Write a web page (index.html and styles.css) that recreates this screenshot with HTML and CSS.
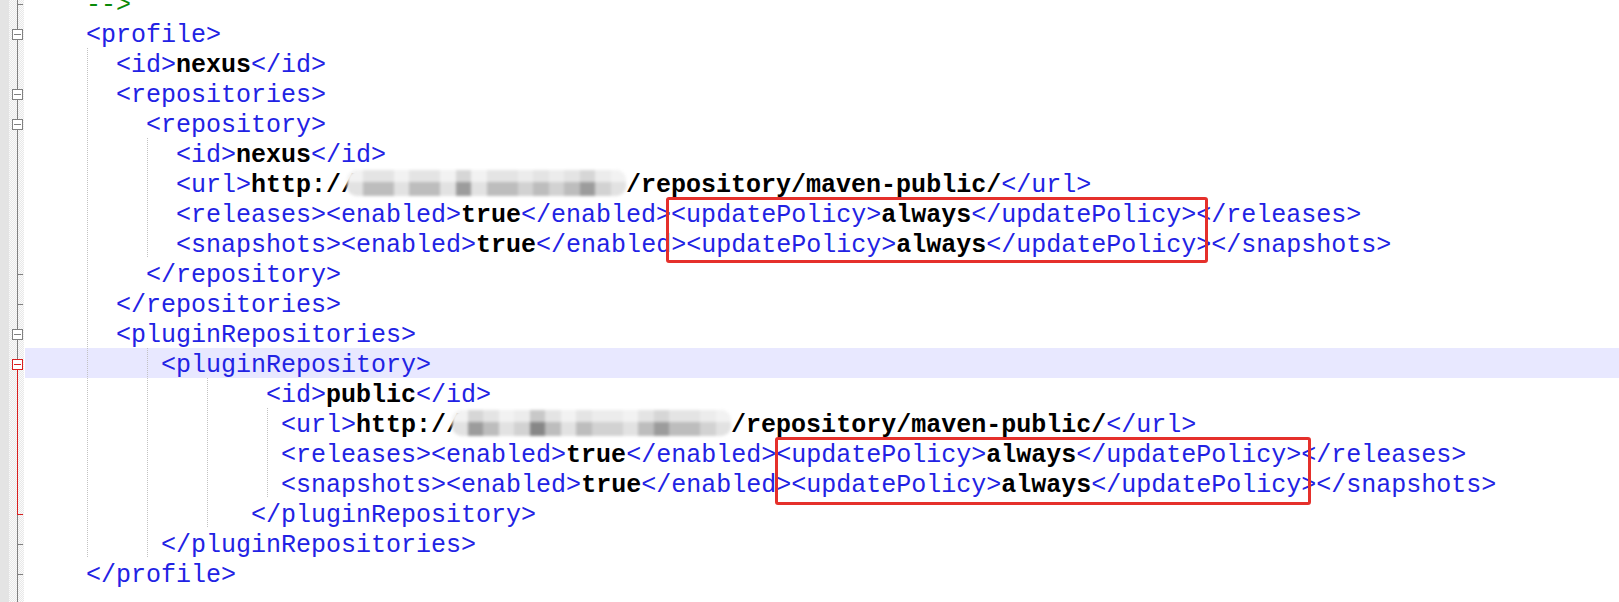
FILE: index.html
```html
<!DOCTYPE html>
<html>
	<head>
		<title>settings.xml</title>
		<link rel="stylesheet" href="styles.css">
	</head>
	<body>
		<div class="editor">
			<div class="margin">
				<div class="f end"></div>
				<div class="f line"><span class="bx"></span></div>
				<div class="f line"></div>
				<div class="f line"><span class="bx"></span></div>
				<div class="f line"><span class="bx"></span></div>
				<div class="f line"></div>
				<div class="f line"></div>
				<div class="f line"></div>
				<div class="f line"></div>
				<div class="f end"></div>
				<div class="f end"></div>
				<div class="f line"><span class="bx"></span></div>
				<div class="f open-red"><span class="bx red"></span></div>
				<div class="f red"></div>
				<div class="f red"></div>
				<div class="f red"></div>
				<div class="f red"></div>
				<div class="f red-end"></div>
				<div class="f end"></div>
				<div class="f end"></div>
				<div class="f line"></div>
			</div>
			<div class="code">
<div class="ln"><span class="c">--&gt;</span></div>
<div class="ln"><span class="t">&lt;profile&gt;</span></div>
<div class="ln"><span class="g">  </span><span class="t">&lt;id&gt;</span><b>nexus</b><span class="t">&lt;/id&gt;</span></div>
<div class="ln"><span class="g">  </span><span class="t">&lt;repositories&gt;</span></div>
<div class="ln"><span class="g">    </span><span class="t">&lt;repository&gt;</span></div>
<div class="ln"><span class="g">    </span><span class="g">  </span><span class="t">&lt;id&gt;</span><b>nexus</b><span class="t">&lt;/id&gt;</span></div>
<div class="ln"><span class="g">    </span><span class="g">  </span><span class="t">&lt;url&gt;</span><b>http://</b><span class="blur"><i class="a"></i><i class="c"></i><i class="c"></i><i class="a"></i><i class="c"></i><i class="c"></i><i class="a"></i><i class="d"></i><i class="a"></i><i class="c"></i><i class="c"></i><i class="b"></i><i class="c"></i><i class="b"></i><i class="c"></i><i class="d"></i><i class="b"></i><i class="a"></i></span><b>/repository/maven-public/</b><span class="t">&lt;/url&gt;</span></div>
<div class="ln"><span class="g">    </span><span class="g">  </span><span class="t">&lt;releases&gt;&lt;enabled&gt;</span><b>true</b><span class="t">&lt;/enabled&gt;&lt;updatePolicy&gt;</span><b>always</b><span class="t">&lt;/updatePolicy&gt;&lt;/releases&gt;</span></div>
<div class="ln"><span class="g">    </span><span class="g">  </span><span class="t">&lt;snapshots&gt;&lt;enabled&gt;</span><b>true</b><span class="t">&lt;/enabled&gt;&lt;updatePolicy&gt;</span><b>always</b><span class="t">&lt;/updatePolicy&gt;&lt;/snapshots&gt;</span></div>
<div class="ln"><span class="g">    </span><span class="t">&lt;/repository&gt;</span></div>
<div class="ln"><span class="g">  </span><span class="t">&lt;/repositories&gt;</span></div>
<div class="ln"><span class="g">  </span><span class="t">&lt;pluginRepositories&gt;</span></div>
<div class="ln current"><span class="g">    </span><span class="g"> </span><span class="t">&lt;pluginRepository&gt;</span></div>
<div class="ln"><span class="g">    </span><span class="g">    </span><span class="g">    </span><span class="t">&lt;id&gt;</span><b>public</b><span class="t">&lt;/id&gt;</span></div>
<div class="ln"><span class="g">    </span><span class="g">    </span><span class="g">    </span><span class="g"> </span><span class="t">&lt;url&gt;</span><b>http://</b><span class="blur"><i class="a"></i><i class="d"></i><i class="c"></i><i class="a"></i><i class="b"></i><i class="e"></i><i class="c"></i><i class="a"></i><i class="c"></i><i class="b"></i><i class="b"></i><i class="a"></i><i class="c"></i><i class="d"></i><i class="c"></i><i class="c"></i><i class="b"></i><i class="a"></i></span><b>/repository/maven-public/</b><span class="t">&lt;/url&gt;</span></div>
<div class="ln"><span class="g">    </span><span class="g">    </span><span class="g">    </span><span class="g"> </span><span class="t">&lt;releases&gt;&lt;enabled&gt;</span><b>true</b><span class="t">&lt;/enabled&gt;&lt;updatePolicy&gt;</span><b>always</b><span class="t">&lt;/updatePolicy&gt;&lt;/releases&gt;</span></div>
<div class="ln"><span class="g">    </span><span class="g">    </span><span class="g">    </span><span class="g"> </span><span class="t">&lt;snapshots&gt;&lt;enabled&gt;</span><b>true</b><span class="t">&lt;/enabled&gt;&lt;updatePolicy&gt;</span><b>always</b><span class="t">&lt;/updatePolicy&gt;&lt;/snapshots&gt;</span></div>
<div class="ln"><span class="g">    </span><span class="g">    </span><span class="g">   </span><span class="t">&lt;/pluginRepository&gt;</span></div>
<div class="ln"><span class="g">    </span><span class="g"> </span><span class="t">&lt;/pluginRepositories&gt;</span></div>
<div class="ln"><span class="t">&lt;/profile&gt;</span></div>
<div class="ln"></div>
			</div>
			<div class="mark first"></div>
			<div class="mark second"></div>
		</div>
	</body>
</html>
```

FILE: styles.css
```css
body {
	margin: 0;
	background: #fff;
}
.editor {
	position: relative;
	display: flex;
	height: 602px;
	overflow: hidden;
}

/* fold margin */
.margin {
	flex: 0 0 25px;
	margin-top: -12px;
	background:
		linear-gradient(to right, #e4e4e4 9px, transparent 9px, transparent 24px, #fff 24px),
		repeating-conic-gradient(#e8e8e8 0 25%, #fbfbfb 0 50%) 0 0 / 2px 2px;
}
.f {
	height: 30px;
	display: flex;
	align-items: flex-start;
}
.f.line {
	background: linear-gradient(#808080, #808080) 17px 0 / 1px 100% no-repeat;
}
.f.end {
	background:
		linear-gradient(#808080, #808080) 17px 16px / 6px 1px no-repeat,
		linear-gradient(#808080, #808080) 17px 0 / 1px 100% no-repeat;
}
.f.open-red {
	background:
		linear-gradient(#808080, #808080) 17px 0 / 1px 15px no-repeat,
		linear-gradient(#d91f1f, #d91f1f) 17px 15px / 1px 15px no-repeat;
}
.f.red {
	background: linear-gradient(#d91f1f, #d91f1f) 17px 0 / 1px 100% no-repeat;
}
.f.red-end {
	background:
		linear-gradient(#d91f1f, #d91f1f) 17px 16px / 6px 1px no-repeat,
		linear-gradient(#d91f1f, #d91f1f) 17px 0 / 1px 17px no-repeat,
		linear-gradient(#808080, #808080) 17px 17px / 1px 13px no-repeat;
}
.bx {
	box-sizing: border-box;
	width: 11px;
	height: 11px;
	margin: 11px 0 0 12px;
	border: 1px solid #808080;
	background: linear-gradient(#808080, #808080) 1px 4px / 7px 1px no-repeat, #fff;
}
.bx.red {
	border-color: #d91f1f;
	background: linear-gradient(#d91f1f, #d91f1f) 1px 4px / 7px 1px no-repeat, #fff;
}

/* text area */
.code {
	flex: 1;
	margin-top: -12px;
	font-family: "Liberation Mono", monospace;
	font-size: 25px;
	color: #000;
}
.ln {
	height: 30px;
	line-height: 36px;
	padding-left: 61px;
	white-space: pre;
}
.ln.current {
	background: #e8e8ff;
}
.t {
	color: #2222e4;
}
.c {
	color: #0a8a0a;
}
.ln b {
	font-weight: bold;
}
.g {
	display: inline-block;
	height: 30px;
	vertical-align: top;
	background: repeating-linear-gradient(to bottom, #c2c2c2 0 1px, transparent 1px 2px) 1px 0 / 1px 100% no-repeat;
}

/* blurred host name */
.blur {
	display: inline-flex;
	vertical-align: top;
	width: 279px;
	height: 26px;
	margin: 2px 0 0 -9px;
	border-radius: 10px;
	overflow: hidden;
	filter: blur(1.6px);
	background: #ececec;
}
.blur i {
	flex: 1;
}
.blur .a {
	background: linear-gradient(#f2f2f2 45%, #e2e2e2 45%);
}
.blur .b {
	background: linear-gradient(#ececec 45%, #d2d2d2 45%);
}
.blur .c {
	background: linear-gradient(#e4e4e4 45%, #bdbdbd 45%);
}
.blur .d {
	background: linear-gradient(#d6d6d6 45%, #9c9c9c 45%);
}
.blur .e {
	background: linear-gradient(#c8c8c8 45%, #878787 45%);
}

/* red highlight frames drawn over the code */
.mark {
	position: absolute;
	box-sizing: border-box;
	border: 3px solid #e5302b;
	border-radius: 3px;
}
.mark.first {
	left: 666px;
	top: 197px;
	width: 542px;
	height: 66px;
}
.mark.second {
	left: 775px;
	top: 437px;
	width: 536px;
	height: 68px;
}
```
